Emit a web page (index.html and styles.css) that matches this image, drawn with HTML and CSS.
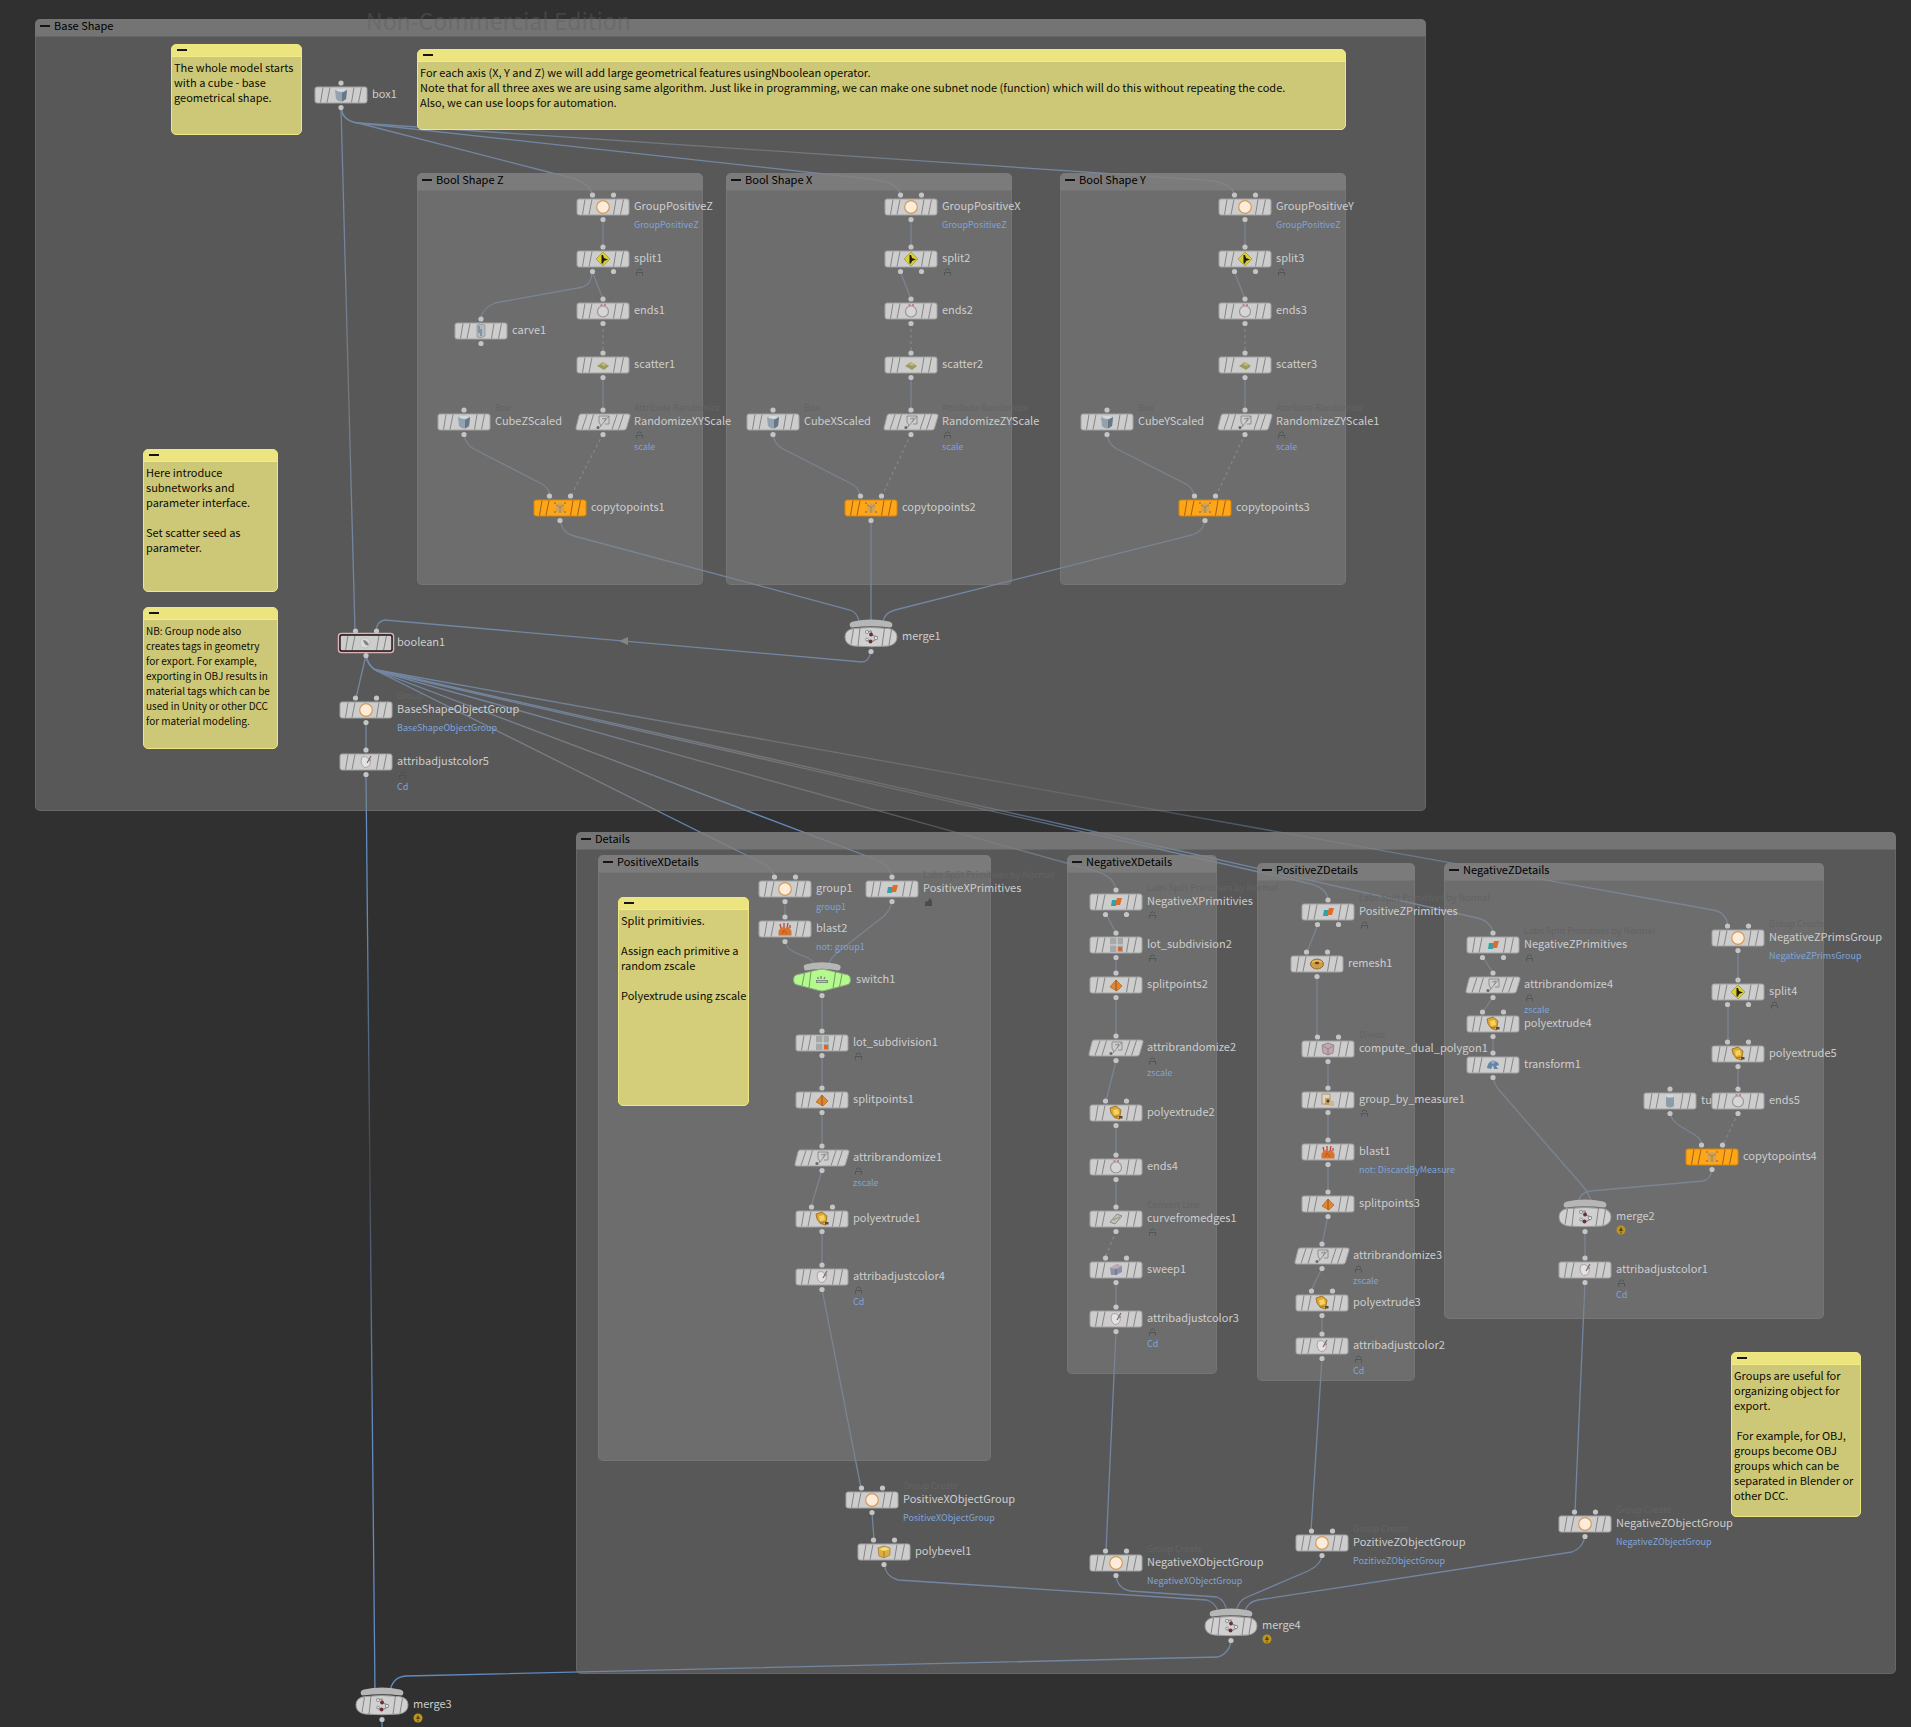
FILE: index.html
```html
<!DOCTYPE html>
<html lang="en">
<head>
<meta charset="utf-8">
<meta name="viewport" content="width=device-width, initial-scale=1">
<title>Network view</title>
<link rel="stylesheet" href="styles.css">
</head>
<body>

<!-- Shared node shapes and icons, drawn around the node centre -->
<svg class="defs" aria-hidden="true">
  <defs>
    <g id="dot"><circle r="2.6" fill="#c4c4c4"/></g>
    <g id="in1"><use href="#dot" y="-12"/></g>
    <g id="in2"><use href="#dot" x="-10.5" y="-12"/><use href="#dot" x="10.5" y="-12"/></g>
    <g id="out1"><use href="#dot" y="12.5"/></g>
    <g id="out2"><use href="#dot" x="-10.5" y="12.5"/><use href="#dot" x="10.5" y="12.5"/></g>
    <g id="ribs" fill="none" stroke-width="1"><path d="M-20.500 7.500L-18 -7.500M-14 7.500L-11 -7.500M10.500 7.500L13 -7.500M17.500 7.500L20.500 -7.500"/></g>
    <g id="body"><rect x="-26" y="-8" width="52" height="16" rx="2" fill="#cdcdcd" stroke="#a2a2a2"/><use href="#ribs" stroke="#858585"/></g>
    <g id="body-orange"><rect x="-26" y="-8" width="52" height="16" rx="2" fill="#ffa518" stroke="#d98405"/><use href="#ribs" stroke="#99631a"/></g>
    <g id="slant"><path d="M-22 -8H25Q27.500 -8 27 -6L23.500 6Q23 8 21 8H-25Q-27.500 8 -27 6L-24 -6Q-23.500 -8 -22 -8Z" fill="#cdcdcd" stroke="#a2a2a2"/><path d="M-21 7.500L-16 -7.500M-14 7.500L-9.500 -7.500M9 7.500L14 -7.500M15.500 7.500L20.500 -7.500" stroke="#858585"/></g>
    <g id="cap"><path d="M-21 -10.500Q-22.500 -14.500 -18 -15.500Q0 -19.500 18 -15.500Q22.500 -14.500 21 -10.500Q20.500 -9.500 19 -9.500Q0 -12 -19 -9.500Q-20.500 -9.500 -21 -10.500Z" fill="#b6b6b6"/></g>
    <g id="merge">
      <use href="#cap"/><use href="#dot" y="14.5"/>
      <path d="M-17 -8.500Q0 -10.500 17 -8.500Q26 -7.500 26 0Q26 7.500 17 9Q0 10.500 -17 9Q-26 7.500 -26 0Q-26 -7.500 -17 -8.500Z" fill="#d0d0d0" stroke="#9b9b9b"/>
      <path d="M-20 7.500L-17.500 -8M-13 9L-11 -9M11 9L13.500 -9M18 8L20.500 -7" stroke="#858585"/>
      <path d="M-5 -5L0 -6L1 -2L6 0L4 3L0 5L-5 3" fill="none" stroke="#8d8d8d" stroke-width="1.200"/>
      <g fill="#e4e4e4" stroke="#666" stroke-width=".6"><circle cx="-4" cy="-5" r="1.600"/><circle cx="5" cy="1" r="1.700"/><circle cx="-4" cy="2.500" r="1.400"/></g>
      <g fill="#6d2f36"><circle cx="0" cy="-2.500" r="1.900"/><circle cx="-.5" cy="4.500" r="1.900"/></g>
    </g>

    <!-- icons -->
    <g id="i-group"><circle r="6.300" fill="#fcecd9" stroke="#d49a5c" stroke-width="1.200"/></g>
    <g id="i-box"><path d="M-6 -5Q0 -8 6 -5L5 4Q0 9 -5 4Z" fill="#93a2ad"/><path d="M-6 -5Q0 -8 6 -5Q1 -1 -6 -5Z" fill="#d3dade"/><path d="M1 -2L6 -5L5 4L1 6.500Z" fill="#667887"/></g>
    <g id="i-split"><path d="M0 -7L7 0L0 7L-7 0Z" fill="#d9ce35" stroke="#a39a3a" stroke-width=".8"/><path d="M-1.500 -4H0L1 -1L5 .5L1 2L0 4.500H-1.500Z" fill="#1e1e12"/></g>
    <g id="i-ends"><circle cy=".5" r="5.500" fill="#d6d6d6" stroke="#9c9496" stroke-width="1.200"/><path d="M-2.500 -6H-.5M1 -6H3" stroke="#c86a70" stroke-width="1.400"/></g>
    <g id="i-carve"><path d="M-4 -6Q0 -7.500 4 -6V5Q0 8 -4 6Z" fill="#b1bac1" stroke="#87929a" stroke-width=".7"/><path d="M0 -2V5M-2 -5V2" stroke="#5f6a74"/></g>
    <g id="i-scatter"><path d="M-6 1L0 -3L6 1L1 5Z" fill="#9c9b62"/><path d="M-2 0L1 -3L3 1Z" fill="#c2bd7d"/></g>
    <g id="i-random"><path d="M-4 -6H6V2H2M-4 -6V0L-2 4M-1 -3L3 -4L1 0M6 -6L-3 5" fill="none" stroke="#888" stroke-width=".9"/><circle cx="-5" cy="5.500" r="1.600" fill="#6a6a6a"/></g>
    <g id="i-copy"><path d="M-4 -4L0 -5L4 -4V3L0 5.500L-4 3Z" fill="#d2a259"/><path d="M-4 -3L0 -1L4 -3M0 -1V5" fill="none" stroke="#a07b42" stroke-width=".8"/><g fill="#9a7d4c"><circle cx="-5" cy="-5" r="1"/><circle cx="5" cy="-5" r="1"/><circle cx="-5" cy="4" r="1"/><circle cx="5" cy="4" r="1"/></g></g>
    <g id="i-bool"><circle cx="-1" r="5" fill="#dadada" stroke="#b4b4b4" stroke-width=".6"/><path d="M-3 -3Q1 -3 3 2Q-1 4 -3 -3Z" fill="#7d8684"/></g>
    <g id="i-color"><path d="M-4 -5Q0 -7 3 -3Q6 1 2 5Q-2 7 -4 3Q-6 -1 -4 -5Z" fill="#e4e2e2" stroke="#a09498" stroke-width=".8"/><path d="M5 -6L1 1" stroke="#6c6c6c" stroke-width="1.200"/><circle cx="4" cy="-2" r="1" fill="#c0777c"/></g>
    <g id="i-blast"><path d="M-4 -1L-5 -5M-1 0V-6M2 -1L3 -6M5 -1L5 -4" stroke="#b63b2d" stroke-width="1.200"/><path d="M-6.500 6.500V2L-4 -2L0 -1L4 -2L6.500 2V6.500Z" fill="#d9742e"/><path d="M-3 5L-1 1L2 5" fill="none" stroke="#b35722"/></g>
    <g id="i-prims"><path d="M-4 -2H1L0 4H-5Z" fill="#2ea2a4"/><path d="M1 -4H6L4 3H-1Z" fill="#df6c2b"/></g>
    <g id="i-lot"><rect x="-6" y="-7" width="13" height="14" fill="#a5a8a8"/><path d="M-6 0H7M1 -7V7" stroke="#d8d8d8"/><rect x="2" y="2" width="4" height="4" fill="#dd6429"/></g>
    <g id="i-points"><path d="M0 -5L6 1L1 6L-6 2Z" fill="#e1862c" stroke="#aa651f" stroke-width=".7"/><path d="M0 -5V6" stroke="#7f4a16" stroke-width=".8"/></g>
    <g id="i-extrude"><path d="M-6 -5L0 -7L5 -3L4 3L-2 4L-5 0Z" fill="#dfa52c" stroke="#94691b" stroke-width=".8"/><path d="M-3 -3L2 -4L3 1L-2 2Z" fill="#f5d264"/><path d="M-2 4L4 6" stroke="#b8811e" stroke-width="1.500"/><rect x="3" y="3" width="3.500" height="2.500" fill="#5b4a34"/></g>
    <g id="i-bevel"><path d="M-6 -4L0 -6L6 -4V3L0 6L-5 4Z" fill="#dcae42" stroke="#a5833a" stroke-width=".8"/><path d="M-5 -3L0 -1L6 -3L1 -5Z" fill="#f6dc7e"/><path d="M0 -1V5" stroke="#a47721"/></g>
    <g id="i-curve"><path d="M-6 3L1 -5L6 -3L-1 5Z" fill="#bfc3b7" stroke="#7f837a" stroke-width=".9"/><path d="M-3 1L4 -2" stroke="#8b9089"/></g>
    <g id="i-sweep"><path d="M-6 -2L1 -6L6 -4V2L0 5L-5 5Z" fill="#8d92aa"/><path d="M-6 -2L1 -6L6 -4L0 -1Z" fill="#c1a9b4"/><path d="M0 -1V5" stroke="#626984"/></g>
    <g id="i-remesh"><ellipse rx="6.500" ry="5" fill="#d09d43" stroke="#805b22" stroke-width=".8"/><ellipse cy="-1" rx="2.200" ry="1.200" fill="#63451b"/><path d="M-5 -2Q0 -5 5 -2" fill="none" stroke="#edca7a"/></g>
    <g id="i-dual"><path d="M-6 -4L0 -6L6 -4L5 4L0 6L-5 4Z" fill="#bda9ae" stroke="#927b82" stroke-width=".8"/><path d="M-5 -3L0 0L5 -3M0 0V6" fill="none" stroke="#93757e" stroke-width=".8"/></g>
    <g id="i-measure"><rect x="-6" y="-6" width="8" height="10" fill="#e1d6bf" stroke="#9c8a65" stroke-width=".8"/><path d="M-3 -2H2V5H-3Z" fill="#c49e5b"/><path d="M1 1H6V6H1Z" fill="#d0b68b"/><circle cx="0" cy="1" r="1.500" fill="#49402f"/></g>
    <g id="i-move"><path d="M-6 3Q-5 -4 0 -4Q5 -4 6 0L3 1L5 4H1L0 0L-2 4Z" fill="#6683a8"/><circle cx="0" cy="-3" r="2" fill="#92a9c6"/></g>
    <g id="i-tube"><path d="M-4 -5Q0 -7 4 -5V5Q0 8 -4 5Z" fill="#8b9da8"/><ellipse cy="-5" rx="4" ry="1.500" fill="#d1d8dc"/></g>

    <!-- complete nodes -->
    <g id="n-box"><use href="#in1"/><use href="#out1"/><use href="#body"/><use href="#i-box"/></g>
    <g id="n-group"><use href="#in2"/><use href="#out1"/><use href="#body"/><use href="#i-group"/></g>
    <g id="n-split"><use href="#in1"/><use href="#out2"/><use href="#body"/><use href="#i-split"/></g>
    <g id="n-ends"><use href="#in1"/><use href="#out1"/><use href="#body"/><use href="#i-ends"/></g>
    <g id="n-carve"><use href="#in1"/><use href="#out1"/><use href="#body"/><use href="#i-carve"/></g>
    <g id="n-scatter"><use href="#in1"/><use href="#out1"/><use href="#body"/><use href="#i-scatter"/></g>
    <g id="n-random"><use href="#in1"/><use href="#out1"/><use href="#slant"/><use href="#i-random"/></g>
    <g id="n-copy"><use href="#in2"/><use href="#out1"/><use href="#body-orange"/><use href="#i-copy"/></g>
    <g id="n-bool"><use href="#in2"/><use href="#out1"/><rect x="-27.500" y="-9.500" width="55" height="19" rx="3" fill="#5a3a3e" stroke="#dcb3b6" stroke-width="1.500"/><use href="#body"/><rect x="-26" y="-8" width="52" height="16" rx="2" fill="none" stroke="#26191b" stroke-width="1.400"/><use href="#i-bool"/></g>
    <g id="n-color"><use href="#in1"/><use href="#out1"/><use href="#body"/><use href="#i-color"/></g>
    <g id="n-blast"><use href="#in1"/><use href="#out1"/><use href="#body"/><use href="#i-blast"/></g>
    <g id="n-prim"><use href="#in1"/><use href="#out1"/><use href="#body"/><use href="#i-prims"/></g>
    <g id="n-prims"><use href="#in1"/><use href="#out2"/><use href="#body"/><use href="#i-prims"/></g>
    <g id="n-lot"><use href="#in1"/><use href="#out1"/><use href="#body"/><use href="#i-lot"/></g>
    <g id="n-points"><use href="#in1"/><use href="#out1"/><use href="#body"/><use href="#i-points"/></g>
    <g id="n-extrude"><use href="#in2"/><use href="#out1"/><use href="#body"/><use href="#i-extrude"/></g>
    <g id="n-bevel"><use href="#in2"/><use href="#out1"/><use href="#body"/><use href="#i-bevel"/></g>
    <g id="n-curve"><use href="#in1"/><use href="#out1"/><use href="#body"/><use href="#i-curve"/></g>
    <g id="n-sweep"><use href="#in2"/><use href="#out1"/><use href="#body"/><use href="#i-sweep"/></g>
    <g id="n-remesh"><use href="#in2"/><use href="#out1"/><use href="#body"/><use href="#i-remesh"/></g>
    <g id="n-dual"><use href="#in2"/><use href="#out1"/><use href="#body"/><use href="#i-dual"/></g>
    <g id="n-measure"><use href="#in1"/><use href="#out1"/><use href="#body"/><use href="#i-measure"/></g>
    <g id="n-move"><use href="#in1"/><use href="#out1"/><use href="#body"/><use href="#i-move"/></g>
    <g id="n-tube"><use href="#in1"/><use href="#out1"/><use href="#body"/><use href="#i-tube"/></g>
    <g id="n-switch">
      <path d="M-18 -12Q-19.500 -15 -15 -16Q0 -19.500 15 -16Q19.500 -15 18.500 -12Q18 -9.500 16 -9.500Q0 -13 -16 -9.500Q-18 -9.500 -18 -12Z" fill="#b6b6b6"/>
      <use href="#dot" y="15.5"/>
      <path d="M-26 -5L-3 -10.500Q0 -11.500 3 -10.500L26 -5Q28.500 -4 28.500 0Q28.500 3.500 26 4.500L3 10.500Q0 11.500 -3 10.500L-26 4.500Q-28.500 3.500 -28.500 0Q-28.500 -4 -26 -5Z" fill="#b3f98d" stroke="#8cab7c"/>
      <path d="M-20 6L-17.500 -7M-13 8L-11 -8.500M11 8.500L13.500 -8M17.500 7L20 -6" stroke="#6f9c5a"/>
      <path d="M-6 0H6V3H-6Z" fill="#7d8a80"/><path d="M-4 -3V-1M-1 -4V-1M3 -3L2 -1" stroke="#7d8a80" stroke-width="1.500"/><path d="M-5 1.500H5" stroke="#c8d6ca" stroke-width=".8"/>
    </g>

    <g id="lock" fill="none" stroke="#465050" opacity=".8"><path d="M3.500 4V3Q5.500 .5 7.500 3V4M2 5.500H9M2.500 6V8.500M8.500 6V8.500"/></g>
    <g id="lock-dark"><path d="M2 9V5L5 4L7 1L9 4V9Z" fill="#4b4b4b"/></g>
    <g id="warn"><circle cx="5" cy="5" r="4.500" fill="#bd941e"/><path d="M5 2L7 6H3ZM4.500 6.500H5.500V8.500H4.500Z" fill="#58430a"/></g>

    <linearGradient id="fade-box" gradientUnits="userSpaceOnUse" x1="341" y1="107" x2="355" y2="631"><stop offset=".2" stop-color="#628abf"/><stop offset=".55" stop-color="#686d76"/><stop offset=".8" stop-color="#628abf"/></linearGradient>
    <linearGradient id="fade-y" gradientUnits="userSpaceOnUse" x1="341" y1="107" x2="1234" y2="195"><stop offset=".1" stop-color="#628abf"/><stop offset=".45" stop-color="#646464"/><stop offset=".75" stop-color="#628abf"/></linearGradient>
    <linearGradient id="fade-out" gradientUnits="userSpaceOnUse" x1="366" y1="774" x2="375" y2="1690"><stop offset=".15" stop-color="#628abf"/><stop offset=".42" stop-color="#45474b"/><stop offset=".7" stop-color="#628abf"/></linearGradient>
    <linearGradient id="fade-fan" gradientUnits="userSpaceOnUse" x1="365" y1="655" x2="1330" y2="890"><stop offset=".12" stop-color="#628abf"/><stop offset=".4" stop-color="#686a70"/><stop offset=".6" stop-color="#55575b"/><stop offset=".85" stop-color="#628abf"/></linearGradient>
    <linearGradient id="fade-far" gradientUnits="userSpaceOnUse" x1="365" y1="655" x2="1728" y2="926"><stop offset=".06" stop-color="#628abf"/><stop offset=".3" stop-color="#626469"/><stop offset=".55" stop-color="#484a4c"/><stop offset=".9" stop-color="#628abf"/></linearGradient>
    <linearGradient id="fade-near" gradientUnits="userSpaceOnUse" x1="365" y1="655" x2="892" y2="877"><stop offset=".1" stop-color="#628abf"/><stop offset=".4" stop-color="#70757f"/><stop offset=".68" stop-color="#628abf"/></linearGradient>
  </defs>
</svg>

<main class="network">

  <svg class="wires" aria-hidden="true">
    <!-- base shape -->
    <path d="M341 107L355 631" stroke="url(#fade-box)"/>
    <path d="M341 107Q342 121 358 123L556 174Q590 180 592 195"/>
    <path d="M341 107Q342 121 358 123L870 179Q899 182 900 195"/>
    <path d="M341 107Q342 121 358 123L1204 180Q1233 182 1234 195" stroke="url(#fade-y)"/>
    <path d="M603 219V247M592 271Q592 284 583 287L495 303Q482 308 481 319M592 271L603 299M603 377V410M464 434Q465 444 474 449L540 483Q549 487 550 496"/>
    <path d="M911 219V247M900 271L911 299M911 377V410M773 434Q774 444 783 449L850 483Q859 487 860 496"/>
    <path d="M1245 219V247M1234 271L1245 299M1245 377V410M1107 434Q1108 444 1117 449L1184 483Q1193 487 1194 496"/>
    <path class="dashed" d="M603 323V353M911 323V353M1245 323V353M603 434L571 496M911 434L882 496M1245 434L1216 496M1116 1231L1105 1258M1738 1113L1723 1145"/>
    <path d="M560 520Q562 533 574 536L850 610Q858 613 859 622M871 520V622M1205 520Q1204 531 1192 535L895 610Q884 613 883 622"/>
    <path d="M871 651Q869 662 862 662L385 620Q377 621 376 631"/>
    <path d="M366 655L356 698M366 722V750"/>
    <path d="M366 774L375 1694" stroke="url(#fade-out)"/>
    <!-- boolean result to the detail branches -->
    <path d="M366 655Q368 667 377 671L758 861Q773 867 774 877" stroke="url(#fade-near)"/>
    <path d="M366 655Q368 667 377 671L872 858Q890 864 892 877" stroke="url(#fade-near)"/>
    <path d="M366 655Q368 667 377 671L1095 871Q1114 876 1116 890" stroke="url(#fade-fan)"/>
    <path d="M366 655Q368 667 377 671L1307 883Q1327 887 1328 900" stroke="url(#fade-fan)"/>
    <path d="M366 655Q368 667 377 670L1473 917Q1491 920 1493 933" stroke="url(#fade-fan)"/>
    <path d="M366 655Q368 667 377 670L1713 910Q1726 912 1728 926" stroke="url(#fade-far)"/>
    <!-- positive X -->
    <path d="M785 901V917M785 941Q786 948 794 952L808 958Q815 961 816 970M892 901Q891 909 884 916L838 952Q828 960 827 970M822 995V1031M822 1055V1088M822 1112V1146M822 1170L811 1207M822 1231V1265M822 1289L861 1488M872 1512L874 1540"/>
    <path d="M884 1564Q886 1577 898 1580L1207 1600Q1216 1603 1218 1612"/>
    <!-- negative X -->
    <path d="M1106 914L1116 933M1116 957V973M1116 997V1037M1116 1061L1106 1101M1116 1125V1155M1116 1179V1207M1116 1282V1307M1116 1331L1106 1551M1116 1575Q1117 1588 1130 1591L1217 1597Q1225 1600 1227 1612"/>
    <!-- positive Z -->
    <path d="M1318 924L1307 952M1317 976V1037M1328 1061V1088M1328 1112V1140M1328 1164V1192M1328 1216L1322 1244M1322 1268L1311 1291M1322 1315V1334M1322 1358L1311 1531M1322 1555Q1321 1565 1308 1571L1245 1598Q1238 1602 1236 1612"/>
    <!-- negative Z -->
    <path d="M1483 957L1493 973M1493 997L1483 1012M1493 1036V1053M1493 1077Q1494 1084 1499 1090L1581 1184Q1590 1194 1592 1204M1738 950V980M1728 1004V1042M1738 1066V1089M1670 1113Q1671 1120 1680 1126L1695 1135Q1701 1139 1702 1145M1712 1169Q1711 1179 1703 1181L1590 1191Q1579 1193 1578 1204M1585 1231V1258M1585 1282L1575 1512M1585 1536Q1583 1548 1572 1552L1258 1600Q1247 1602 1245 1612"/>
    <path d="M1231 1640Q1230 1653 1218 1657L406 1676Q392 1677 390 1692M382 1719V1727"/>
  </svg>

  <section class="netbox base-shape"><header><button class="fold" aria-label="Collapse Base Shape"></button><h2>Base Shape</h2></header><div class="area"></div></section>
  <section class="netbox bool-z"><header><button class="fold" aria-label="Collapse Bool Shape Z"></button><h2>Bool Shape Z</h2></header><div class="area"></div></section>
  <section class="netbox bool-x"><header><button class="fold" aria-label="Collapse Bool Shape X"></button><h2>Bool Shape X</h2></header><div class="area"></div></section>
  <section class="netbox bool-y"><header><button class="fold" aria-label="Collapse Bool Shape Y"></button><h2>Bool Shape Y</h2></header><div class="area"></div></section>
  <section class="netbox details"><header><button class="fold" aria-label="Collapse Details"></button><h2>Details</h2></header><div class="area"></div></section>
  <section class="netbox positive-x"><header><button class="fold" aria-label="Collapse PositiveXDetails"></button><h2>PositiveXDetails</h2></header><div class="area"></div></section>
  <section class="netbox negative-x"><header><button class="fold" aria-label="Collapse NegativeXDetails"></button><h2>NegativeXDetails</h2></header><div class="area"></div></section>
  <section class="netbox positive-z"><header><button class="fold" aria-label="Collapse PositiveZDetails"></button><h2>PositiveZDetails</h2></header><div class="area"></div></section>
  <section class="netbox negative-z"><header><button class="fold" aria-label="Collapse NegativeZDetails"></button><h2>NegativeZDetails</h2></header><div class="area"></div></section>

  <p class="edition">Non-Commercial Edition</p>

  <aside class="note note-cube"><header><button class="fold" aria-label="Collapse note"></button></header><p>The whole model starts<br>with a cube - base<br>geometrical shape.</p></aside>
  <aside class="note note-axes"><header><button class="fold" aria-label="Collapse note"></button></header><p>For each axis (X, Y and Z) we will add large geometrical features usingNboolean operator.<br>Note that for all three axes we are using same algorithm. Just like in programming, we can make one subnet node (function) which will do this without repeating the code.<br>Also, we can use loops for automation.</p></aside>
  <aside class="note note-subnets"><header><button class="fold" aria-label="Collapse note"></button></header><p>Here introduce<br>subnetworks and<br>parameter interface.<br><br>Set scatter seed as<br>parameter.</p></aside>
  <aside class="note note-groups"><header><button class="fold" aria-label="Collapse note"></button></header><p>NB: Group node also<br>creates tags in geometry<br>for export. For example,<br>exporting in OBJ results in<br>material tags which can be<br>used in Unity or other DCC<br>for material modeling.</p></aside>
  <aside class="note note-split"><header><button class="fold" aria-label="Collapse note"></button></header><p>Split primitivies.<br><br>Assign each primitive a<br>random zscale<br><br>Polyextrude using zscale</p></aside>
  <aside class="note note-export"><header><button class="fold" aria-label="Collapse note"></button></header><p>Groups are useful for<br>organizing object for<br>export.<br><br>&nbsp;For example, for OBJ,<br>groups become OBJ<br>groups which can be<br>separated in Blender or<br>other DCC.</p></aside>

  <svg class="arrow" viewBox="0 0 10 8" aria-hidden="true"><path d="M0 4L9 0V8Z" fill="#858585"/></svg>

  <!-- base shape nodes -->
  <div class="node" style="left:341px;top:95px"><svg viewBox="-30 -22 60 44"><use href="#n-box"/></svg><div class="label"><span class="name">box1</span></div></div>
  <div class="node" style="left:603px;top:207px"><svg viewBox="-30 -22 60 44"><use href="#n-group"/></svg><div class="label"><span class="name">GroupPositiveZ</span><span class="sub">GroupPositiveZ</span></div></div>
  <div class="node" style="left:603px;top:259px"><svg viewBox="-30 -22 60 44"><use href="#n-split"/></svg><div class="label"><span class="name">split1</span><svg class="flag"><use href="#lock"/></svg></div></div>
  <div class="node" style="left:603px;top:311px"><svg viewBox="-30 -22 60 44"><use href="#n-ends"/></svg><div class="label"><span class="name">ends1</span></div></div>
  <div class="node" style="left:481px;top:331px"><svg viewBox="-30 -22 60 44"><use href="#n-carve"/></svg><div class="label"><span class="name">carve1</span></div></div>
  <div class="node" style="left:603px;top:365px"><svg viewBox="-30 -22 60 44"><use href="#n-scatter"/></svg><div class="label"><span class="name">scatter1</span></div></div>
  <div class="node" style="left:464px;top:422px"><svg viewBox="-30 -22 60 44"><use href="#n-box"/></svg><div class="label"><span class="hint">Box</span><span class="name">CubeZScaled</span></div></div>
  <div class="node" style="left:603px;top:422px"><svg viewBox="-30 -22 60 44"><use href="#n-random"/></svg><div class="label"><span class="hint">Attribute Randomize</span><span class="name">RandomizeXYScale</span><svg class="flag"><use href="#lock"/></svg><span class="sub">scale</span></div></div>
  <div class="node" style="left:560px;top:508px"><svg viewBox="-30 -22 60 44"><use href="#n-copy"/></svg><div class="label"><span class="name">copytopoints1</span></div></div>

  <div class="node" style="left:911px;top:207px"><svg viewBox="-30 -22 60 44"><use href="#n-group"/></svg><div class="label"><span class="name">GroupPositiveX</span><span class="sub">GroupPositiveZ</span></div></div>
  <div class="node" style="left:911px;top:259px"><svg viewBox="-30 -22 60 44"><use href="#n-split"/></svg><div class="label"><span class="name">split2</span><svg class="flag"><use href="#lock"/></svg></div></div>
  <div class="node" style="left:911px;top:311px"><svg viewBox="-30 -22 60 44"><use href="#n-ends"/></svg><div class="label"><span class="name">ends2</span></div></div>
  <div class="node" style="left:911px;top:365px"><svg viewBox="-30 -22 60 44"><use href="#n-scatter"/></svg><div class="label"><span class="name">scatter2</span></div></div>
  <div class="node" style="left:773px;top:422px"><svg viewBox="-30 -22 60 44"><use href="#n-box"/></svg><div class="label"><span class="hint">Box</span><span class="name">CubeXScaled</span></div></div>
  <div class="node" style="left:911px;top:422px"><svg viewBox="-30 -22 60 44"><use href="#n-random"/></svg><div class="label"><span class="hint">Attribute Randomize</span><span class="name">RandomizeZYScale</span><svg class="flag"><use href="#lock"/></svg><span class="sub">scale</span></div></div>
  <div class="node" style="left:871px;top:508px"><svg viewBox="-30 -22 60 44"><use href="#n-copy"/></svg><div class="label"><span class="name">copytopoints2</span></div></div>

  <div class="node" style="left:1245px;top:207px"><svg viewBox="-30 -22 60 44"><use href="#n-group"/></svg><div class="label"><span class="name">GroupPositiveY</span><span class="sub">GroupPositiveZ</span></div></div>
  <div class="node" style="left:1245px;top:259px"><svg viewBox="-30 -22 60 44"><use href="#n-split"/></svg><div class="label"><span class="name">split3</span><svg class="flag"><use href="#lock"/></svg></div></div>
  <div class="node" style="left:1245px;top:311px"><svg viewBox="-30 -22 60 44"><use href="#n-ends"/></svg><div class="label"><span class="name">ends3</span></div></div>
  <div class="node" style="left:1245px;top:365px"><svg viewBox="-30 -22 60 44"><use href="#n-scatter"/></svg><div class="label"><span class="name">scatter3</span></div></div>
  <div class="node" style="left:1107px;top:422px"><svg viewBox="-30 -22 60 44"><use href="#n-box"/></svg><div class="label"><span class="hint">Box</span><span class="name">CubeYScaled</span></div></div>
  <div class="node" style="left:1245px;top:422px"><svg viewBox="-30 -22 60 44"><use href="#n-random"/></svg><div class="label"><span class="hint">Attribute Randomize</span><span class="name">RandomizeZYScale1</span><svg class="flag"><use href="#lock"/></svg><span class="sub">scale</span></div></div>
  <div class="node" style="left:1205px;top:508px"><svg viewBox="-30 -22 60 44"><use href="#n-copy"/></svg><div class="label"><span class="name">copytopoints3</span></div></div>

  <div class="node" style="left:871px;top:637px"><svg viewBox="-30 -22 60 44"><use href="#merge"/></svg><div class="label"><span class="name">merge1</span></div></div>
  <div class="node" style="left:366px;top:643px"><svg viewBox="-30 -22 60 44"><use href="#n-bool"/></svg><div class="label"><span class="name">boolean1</span></div></div>
  <div class="node" style="left:366px;top:710px"><svg viewBox="-30 -22 60 44"><use href="#n-group"/></svg><div class="label"><span class="hint">Group</span><span class="name">BaseShapeObjectGroup</span><span class="sub">BaseShapeObjectGroup</span></div></div>
  <div class="node" style="left:366px;top:762px"><svg viewBox="-30 -22 60 44"><use href="#n-color"/></svg><div class="label"><span class="name">attribadjustcolor5</span><svg class="flag"><use href="#lock"/></svg><span class="sub">Cd</span></div></div>

  <!-- positive X -->
  <div class="node" style="left:785px;top:889px"><svg viewBox="-30 -22 60 44"><use href="#n-group"/></svg><div class="label"><span class="name">group1</span><span class="sub">group1</span></div></div>
  <div class="node" style="left:892px;top:889px"><svg viewBox="-30 -22 60 44"><use href="#n-prim"/></svg><div class="label"><span class="hint">Labs Split Primitives by Normal</span><span class="name">PositiveXPrimitives</span><svg class="flag"><use href="#lock-dark"/></svg></div></div>
  <div class="node" style="left:785px;top:929px"><svg viewBox="-30 -22 60 44"><use href="#n-blast"/></svg><div class="label"><span class="name">blast2</span><span class="sub">not: group1</span></div></div>
  <div class="node" style="left:822px;top:980px"><svg viewBox="-30 -22 60 44"><use href="#n-switch"/></svg><div class="label wide"><span class="name">switch1</span></div></div>
  <div class="node" style="left:822px;top:1043px"><svg viewBox="-30 -22 60 44"><use href="#n-lot"/></svg><div class="label"><span class="name">lot_subdivision1</span><svg class="flag"><use href="#lock"/></svg></div></div>
  <div class="node" style="left:822px;top:1100px"><svg viewBox="-30 -22 60 44"><use href="#n-points"/></svg><div class="label"><span class="name">splitpoints1</span></div></div>
  <div class="node" style="left:822px;top:1158px"><svg viewBox="-30 -22 60 44"><use href="#n-random"/></svg><div class="label"><span class="name">attribrandomize1</span><svg class="flag"><use href="#lock"/></svg><span class="sub">zscale</span></div></div>
  <div class="node" style="left:822px;top:1219px"><svg viewBox="-30 -22 60 44"><use href="#n-extrude"/></svg><div class="label"><span class="name">polyextrude1</span></div></div>
  <div class="node" style="left:822px;top:1277px"><svg viewBox="-30 -22 60 44"><use href="#n-color"/></svg><div class="label"><span class="name">attribadjustcolor4</span><svg class="flag"><use href="#lock"/></svg><span class="sub">Cd</span></div></div>
  <div class="node" style="left:872px;top:1500px"><svg viewBox="-30 -22 60 44"><use href="#n-group"/></svg><div class="label"><span class="hint">Group Create</span><span class="name">PositiveXObjectGroup</span><span class="sub">PositiveXObjectGroup</span></div></div>
  <div class="node" style="left:884px;top:1552px"><svg viewBox="-30 -22 60 44"><use href="#n-bevel"/></svg><div class="label"><span class="name">polybevel1</span></div></div>

  <!-- negative X -->
  <div class="node" style="left:1116px;top:902px"><svg viewBox="-30 -22 60 44"><use href="#n-prims"/></svg><div class="label"><span class="hint">Labs Split Primitives by Normal</span><span class="name">NegativeXPrimitivies</span><svg class="flag"><use href="#lock"/></svg></div></div>
  <div class="node" style="left:1116px;top:945px"><svg viewBox="-30 -22 60 44"><use href="#n-lot"/></svg><div class="label"><span class="name">lot_subdivision2</span><svg class="flag"><use href="#lock"/></svg></div></div>
  <div class="node" style="left:1116px;top:985px"><svg viewBox="-30 -22 60 44"><use href="#n-points"/></svg><div class="label"><span class="name">splitpoints2</span></div></div>
  <div class="node" style="left:1116px;top:1048px"><svg viewBox="-30 -22 60 44"><use href="#n-random"/></svg><div class="label"><span class="name">attribrandomize2</span><svg class="flag"><use href="#lock"/></svg><span class="sub">zscale</span></div></div>
  <div class="node" style="left:1116px;top:1113px"><svg viewBox="-30 -22 60 44"><use href="#n-extrude"/></svg><div class="label"><span class="name">polyextrude2</span></div></div>
  <div class="node" style="left:1116px;top:1167px"><svg viewBox="-30 -22 60 44"><use href="#n-ends"/></svg><div class="label"><span class="name">ends4</span></div></div>
  <div class="node" style="left:1116px;top:1219px"><svg viewBox="-30 -22 60 44"><use href="#n-curve"/></svg><div class="label"><span class="hint">Convert Line</span><span class="name">curvefromedges1</span><svg class="flag"><use href="#lock"/></svg></div></div>
  <div class="node" style="left:1116px;top:1270px"><svg viewBox="-30 -22 60 44"><use href="#n-sweep"/></svg><div class="label"><span class="name">sweep1</span></div></div>
  <div class="node" style="left:1116px;top:1319px"><svg viewBox="-30 -22 60 44"><use href="#n-color"/></svg><div class="label"><span class="name">attribadjustcolor3</span><svg class="flag"><use href="#lock"/></svg><span class="sub">Cd</span></div></div>
  <div class="node" style="left:1116px;top:1563px"><svg viewBox="-30 -22 60 44"><use href="#n-group"/></svg><div class="label"><span class="hint">Group Create</span><span class="name">NegativeXObjectGroup</span><span class="sub">NegativeXObjectGroup</span></div></div>

  <!-- positive Z -->
  <div class="node" style="left:1328px;top:912px"><svg viewBox="-30 -22 60 44"><use href="#n-prims"/></svg><div class="label"><span class="hint">Labs Split Primitives by Normal</span><span class="name">PositiveZPrimitives</span><svg class="flag"><use href="#lock"/></svg></div></div>
  <div class="node" style="left:1317px;top:964px"><svg viewBox="-30 -22 60 44"><use href="#n-remesh"/></svg><div class="label"><span class="name">remesh1</span></div></div>
  <div class="node" style="left:1328px;top:1049px"><svg viewBox="-30 -22 60 44"><use href="#n-dual"/></svg><div class="label"><span class="hint">Divide</span><span class="name">compute_dual_polygon1</span></div></div>
  <div class="node" style="left:1328px;top:1100px"><svg viewBox="-30 -22 60 44"><use href="#n-measure"/></svg><div class="label"><span class="name">group_by_measure1</span><svg class="flag"><use href="#lock"/></svg></div></div>
  <div class="node" style="left:1328px;top:1152px"><svg viewBox="-30 -22 60 44"><use href="#n-blast"/></svg><div class="label"><span class="name">blast1</span><span class="sub">not: DiscardByMeasure</span></div></div>
  <div class="node" style="left:1328px;top:1204px"><svg viewBox="-30 -22 60 44"><use href="#n-points"/></svg><div class="label"><span class="name">splitpoints3</span></div></div>
  <div class="node" style="left:1322px;top:1256px"><svg viewBox="-30 -22 60 44"><use href="#n-random"/></svg><div class="label"><span class="name">attribrandomize3</span><svg class="flag"><use href="#lock"/></svg><span class="sub">zscale</span></div></div>
  <div class="node" style="left:1322px;top:1303px"><svg viewBox="-30 -22 60 44"><use href="#n-extrude"/></svg><div class="label"><span class="name">polyextrude3</span></div></div>
  <div class="node" style="left:1322px;top:1346px"><svg viewBox="-30 -22 60 44"><use href="#n-color"/></svg><div class="label"><span class="name">attribadjustcolor2</span><svg class="flag"><use href="#lock"/></svg><span class="sub">Cd</span></div></div>
  <div class="node" style="left:1322px;top:1543px"><svg viewBox="-30 -22 60 44"><use href="#n-group"/></svg><div class="label"><span class="hint">Group Create</span><span class="name">PozitiveZObjectGroup</span><span class="sub">PozitiveZObjectGroup</span></div></div>
  <div class="node" style="left:1231px;top:1626px"><svg viewBox="-30 -22 60 44"><use href="#merge"/></svg><div class="label"><span class="name">merge4</span><svg class="flag"><use href="#warn"/></svg></div></div>

  <!-- negative Z -->
  <div class="node" style="left:1493px;top:945px"><svg viewBox="-30 -22 60 44"><use href="#n-prims"/></svg><div class="label"><span class="hint">Labs Split Primitives by Normal</span><span class="name">NegativeZPrimitives</span><svg class="flag"><use href="#lock"/></svg></div></div>
  <div class="node" style="left:1493px;top:985px"><svg viewBox="-30 -22 60 44"><use href="#n-random"/></svg><div class="label"><span class="name">attribrandomize4</span><svg class="flag"><use href="#lock"/></svg><span class="sub">zscale</span></div></div>
  <div class="node" style="left:1493px;top:1024px"><svg viewBox="-30 -22 60 44"><use href="#n-extrude"/></svg><div class="label"><span class="name">polyextrude4</span></div></div>
  <div class="node" style="left:1493px;top:1065px"><svg viewBox="-30 -22 60 44"><use href="#n-move"/></svg><div class="label"><span class="name">transform1</span></div></div>
  <div class="node" style="left:1738px;top:938px"><svg viewBox="-30 -22 60 44"><use href="#n-group"/></svg><div class="label"><span class="hint">Group Create</span><span class="name">NegativeZPrimsGroup</span><span class="sub">NegativeZPrimsGroup</span></div></div>
  <div class="node" style="left:1738px;top:992px"><svg viewBox="-30 -22 60 44"><use href="#n-split"/></svg><div class="label"><span class="name">split4</span><svg class="flag"><use href="#lock"/></svg></div></div>
  <div class="node" style="left:1738px;top:1054px"><svg viewBox="-30 -22 60 44"><use href="#n-extrude"/></svg><div class="label"><span class="name">polyextrude5</span></div></div>
  <div class="node" style="left:1670px;top:1101px"><svg viewBox="-30 -22 60 44"><use href="#n-tube"/></svg><div class="label"><span class="name">tube1</span></div></div>
  <div class="node" style="left:1738px;top:1101px"><svg viewBox="-30 -22 60 44"><use href="#n-ends"/></svg><div class="label"><span class="name">ends5</span></div></div>
  <div class="node" style="left:1712px;top:1157px"><svg viewBox="-30 -22 60 44"><use href="#n-copy"/></svg><div class="label"><span class="name">copytopoints4</span></div></div>
  <div class="node" style="left:1585px;top:1217px"><svg viewBox="-30 -22 60 44"><use href="#merge"/></svg><div class="label"><span class="name">merge2</span><svg class="flag"><use href="#warn"/></svg></div></div>
  <div class="node" style="left:1585px;top:1270px"><svg viewBox="-30 -22 60 44"><use href="#n-color"/></svg><div class="label"><span class="name">attribadjustcolor1</span><svg class="flag"><use href="#lock"/></svg><span class="sub">Cd</span></div></div>
  <div class="node" style="left:1585px;top:1524px"><svg viewBox="-30 -22 60 44"><use href="#n-group"/></svg><div class="label"><span class="hint">Group Create</span><span class="name">NegativeZObjectGroup</span><span class="sub">NegativeZObjectGroup</span></div></div>

  <div class="node" style="left:382px;top:1705px"><svg viewBox="-30 -22 60 44"><use href="#merge"/></svg><div class="label"><span class="name">merge3</span><svg class="flag"><use href="#warn"/></svg></div></div>
</main>
</body>
</html>
```
FILE: styles.css
```css
* {
  box-sizing: border-box;
}

body {
  margin: 0;
  background: #303030;
  color: #cdcdcd;
  font-family: "Noto Sans CJK SC", "Noto Sans", sans-serif;
  font-size: 11px;
  line-height: 15px;
}

h2,
p {
  margin: 0;
  font-size: inherit;
  font-weight: 400;
}

.defs {
  position: absolute;
  width: 0;
  height: 0;
}

.network {
  position: relative;
  min-height: 100vh;
}

/* Wires */
.wires {
  position: absolute;
  top: 0;
  left: 0;
  width: 100%;
  height: 100%;
  fill: none;
  stroke: #628abf;
  stroke-width: 1.3;
}

.dashed {
  stroke: #8c8c8c;
  stroke-dasharray: 3 3;
}

.arrow {
  position: absolute;
  left: 619px;
  top: 637px;
  width: 10px;
  height: 8px;
}

.edition {
  position: absolute;
  left: 366px;
  top: 4px;
  font-size: 23px;
  line-height: 32px;
  color: rgba(94, 94, 94, 0.45);
}

/* Network boxes */
.netbox {
  position: absolute;
  display: flex;
  flex-direction: column;
  color: #000;
}

.netbox header {
  display: flex;
  align-items: center;
  gap: 4px;
  height: 17px;
  padding-left: 5px;
  padding-bottom: 4px;
  border-radius: 5px 5px 0 0;
  background: rgba(130, 130, 130, 0.83);
}

.netbox .area {
  flex: 1;
  border: 1px solid rgba(140, 140, 140, 0.3);
  border-radius: 0 0 5px 5px;
  background: rgba(131, 131, 131, 0.49);
}

.fold {
  display: flex;
  align-items: center;
  width: 10px;
  height: 10px;
  padding: 0;
  border: 0;
  background: none;
}

.fold::before {
  content: "";
  width: 10px;
  height: 2px;
  background: #151515;
}

.base-shape { left: 35px; top: 19px; width: 1391px; height: 792px; }
.bool-z { left: 417px; top: 173px; width: 286px; height: 412px; }
.bool-x { left: 726px; top: 173px; width: 286px; height: 412px; }
.bool-y { left: 1060px; top: 173px; width: 286px; height: 412px; }
.details { left: 576px; top: 832px; width: 1320px; height: 842px; }
.positive-x { left: 598px; top: 855px; width: 393px; height: 606px; }
.negative-x { left: 1067px; top: 855px; width: 150px; height: 519px; }
.positive-z { left: 1257px; top: 863px; width: 158px; height: 518px; }
.negative-z { left: 1444px; top: 863px; width: 380px; height: 456px; }

/* Sticky notes */
.note {
  position: absolute;
  border: 1px solid #efe882;
  border-radius: 5px;
  background: #cdc877;
  color: #0c0c05;
}

.note header {
  display: flex;
  height: 12px;
  padding-left: 5px;
  border-bottom: 1px solid #f3ec84;
  border-radius: 4px 4px 0 0;
  background: #ece57f;
}

.note p {
  padding: 3px 2px;
  white-space: nowrap;
}

.note-cube { left: 171px; top: 44px; width: 131px; height: 91px; }
.note-axes { left: 417px; top: 49px; width: 929px; height: 81px; }
.note-subnets { left: 143px; top: 449px; width: 135px; height: 143px; }
.note-groups { left: 143px; top: 607px; width: 135px; height: 142px; font-size: 10px; }
.note-split { left: 618px; top: 897px; width: 131px; height: 209px; background: #d4ce7a; }
.note-export { left: 1731px; top: 1352px; width: 130px; height: 165px; }

/* Nodes: the element's origin is the centre of the node */
.node {
  position: absolute;
  width: 0;
  height: 0;
}

.node > svg {
  position: absolute;
  left: -30px;
  top: -22px;
  width: 60px;
  height: 44px;
}

.label {
  position: absolute;
  left: 31px;
  top: -10px;
  display: flex;
  flex-direction: column;
  align-items: flex-start;
  white-space: nowrap;
}

.label.wide {
  left: 34px;
}

.name {
  line-height: 16px;
}

.hint {
  position: absolute;
  left: 0;
  top: -10px;
  font-size: 9px;
  line-height: 12px;
  color: #636363;
}

.sub {
  margin-top: 6px;
  font-size: 9px;
  line-height: 12px;
  color: #7ea4d8;
}

.flag {
  width: 10px;
  height: 10px;
  margin-top: 2px;
}

.flag + .sub {
  margin-top: 1px;
}
```
